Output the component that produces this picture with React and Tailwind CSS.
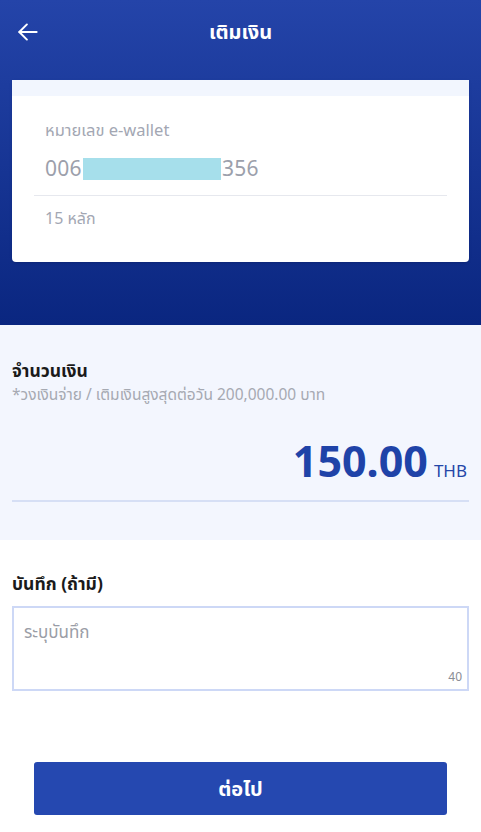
import React from "react";

const BackArrow = () => (
  <svg width="26" height="26" viewBox="0 0 24 24" fill="none" stroke="currentColor" strokeWidth="1.8" strokeLinecap="round" strokeLinejoin="round">
    <path d="M20 12H4" />
    <path d="M11 5l-7 7 7 7" />
  </svg>
);

export default function App() {
  return (
    <div className="w-[481px] h-[832px] bg-white flex flex-col" style={{ fontFamily: '"Noto Sans", "Noto Sans Thai", "Liberation Sans", sans-serif' }}>
      {/* header */}
      <div className="h-[325px] bg-gradient-to-b from-[#2444a9] to-[#0a2680] flex flex-col">
        <div className="h-[64px] relative flex items-center justify-center">
          <button className="absolute left-[15px] top-[19px] text-white">
            <BackArrow />
          </button>
          <h1 className="text-white text-[20px] font-bold">เติมเงิน</h1>
        </div>
        <div className="mx-[12px] mt-[16px] h-[182px] bg-white rounded-b-[4px] overflow-hidden shadow-sm">
          <div className="h-[16px] bg-[#f2f6fe]" />
          <div className="px-[22px] pt-[22px]">
            <div className="px-[11px] text-[16.5px] text-[#a3a7b3]">หมายเลข e-wallet</div>
            <div className="px-[11px] mt-[10px] flex items-center text-[21px] text-[#9ca0ab] tracking-[0.3px]">
              <span>006</span>
              <span className="w-[138px] h-[22px] bg-[#a6dfeb] mx-[1px]" />
              <span>356</span>
            </div>
            <div className="mt-[11px] border-t border-[#e6e8ee]" />
            <div className="px-[11px] mt-[10px] text-[16px] text-[#a3a7b3]">15 หลัก</div>
          </div>
        </div>
      </div>

      {/* amount */}
      <div className="h-[215px] bg-[#f3f6fe] px-[12px] pt-[32px]">
        <div className="text-[17.5px] font-bold text-[#1a1a1a]">จำนวนเงิน</div>
        <div className="text-[15.5px] text-[#a6a9b2]">*วงเงินจ่าย / เติมเงินสูงสุดต่อวัน 200,000.00 บาท</div>
        <div className="mt-[32px] flex items-baseline justify-end pr-[2px]">
          <span className="text-[43px] font-bold text-[#1f43a8] leading-none">150.00</span>
          <span className="ml-[6px] text-[17px] text-[#2446a8]">THB</span>
        </div>
        <div className="mt-[17px] border-t-2 border-[#d6dff5]" />
      </div>

      {/* note */}
      <div className="px-[12px] pt-[30px]">
        <div className="text-[17.5px] font-bold text-[#1a1a1a]">บันทึก (ถ้ามี)</div>
        <div className="mt-[10px] h-[85px] border-2 border-[#cdd8f6] relative px-[10px] pt-[11px]">
          <div className="text-[17px] text-[#9a9da6]">ระบุบันทึก</div>
          <span className="absolute right-[5px] bottom-[3px] text-[12px] text-[#8a8d95]">40</span>
        </div>
      </div>

      <div className="flex-1" />
      <div className="px-[34px] pb-[17px]">
        <button className="w-full h-[53px] bg-[#2548b0] rounded-[3px] text-white text-[20px] font-bold">ต่อไป</button>
      </div>
    </div>
  );
}
